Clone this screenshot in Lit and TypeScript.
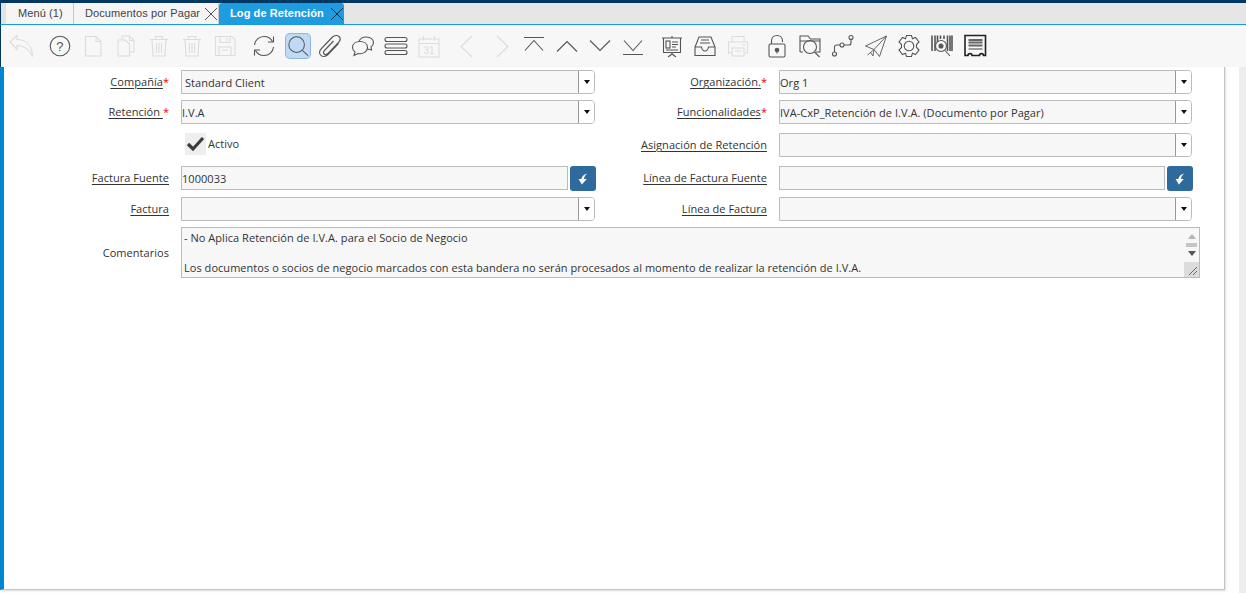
import { LitElement, html, css, svg } from 'lit';
import { customElement } from 'lit/decorators.js';

// toolbar icons, 24x24 box, stroke only unless a shape says otherwise
const ICONS: Record<string, unknown> = {
  undo: svg`<path d="M1 8 8 1.500V5.500C16 5.500 23 10 23.500 22.500 20 15 15 11.500 8 11.500V15.500Z"/>`,
  help: svg`<circle cx="12" cy="12" r="9.800"/><text class="ic-t" x="12" y="17" text-anchor="middle">?</text>`,
  doc: svg`<path d="M4.500 2.500H15L20 7.500V22H4.500Z"/><path d="M15 2.500V7.500H20"/>`,
  copy: svg`<path d="M8 5V2H15.500L20 6.500V18H16"/><path d="M15.500 2V6.500H20"/><path d="M4 6H11L15.500 10V22H4Z"/>`,
  trash: svg`<path d="M3 5.500H21M8.500 5.500V2.500H15.500V5.500M5 5.500 6 22H18L19 5.500M9.500 9V19M12 9V19M14.500 9V19"/>`,
  save: svg`<path d="M2.500 2.500H19L22 5.500V21.500H2.500Z"/><path d="M7 2.500V8.500H17V2.500M14 4V7M6 21.500V13H18V21.500M9 16H15"/>`,
  refresh: svg`<path d="M2.500 11C3 6 7 2.500 12 2.500 16 2.500 19 4.500 20.500 7.500M21.500 13C21 18 17 21.500 12 21.500 8 21.500 5 19.500 3.500 16.500"/><path d="M21.500 2.500V8H16M2.500 21.500V16H8"/>`,
  search: svg`<circle cx="10.500" cy="10.500" r="8.500"/><path d="M16.800 16.800 23 22.500"/>`,
  clip: svg`<path d="M20.500 9.500 10 20.500C7.500 23 4 23 2.500 21 1 19 1.500 16.500 3.500 14.500L14.500 3C16.500 1 19.500 1 21 2.500 22.500 4 22.500 6.500 20.500 8.500L10 19.500C8.800 20.800 7 20.800 6.200 20 5.200 19 5.500 17.500 6.500 16.500L15.500 7"/>`,
  chat: svg`<path d="M9 7.500C4.500 7.500 1.500 10 1.500 13.500 1.500 15.500 2.500 17 4 18L3 21.500 7 19.500C12 20.500 16.500 17.500 16.500 13.500 16.500 10 13.500 7.500 9 7.500Z"/><path d="M8 7.500C9 4.500 12 3 15.500 3 19.500 3 22.500 5.500 22.500 8.500 22.500 10.500 21.500 12 20 13L20.500 16 16.500 15"/>`,
  rows: svg`<rect x="1" y="3.500" width="22" height="4" rx="2"/><rect x="1" y="10" width="22" height="4" rx="2"/><rect x="1" y="16.500" width="22" height="4" rx="2"/>`,
  cal: svg`<path d="M2 5H22V23H2ZM2 9.500H22M6.500 2V6.500M17.500 2V6.500"/><text class="ic-n" x="12" y="20" text-anchor="middle">31</text>`,
  prev: svg`<path d="M16 2 5 12.500 16 23"/>`,
  next: svg`<path d="M8 2 19 12.500 8 23"/>`,
  first: svg`<path d="M2 3.500H22M3 16.500 12 6.500 21 16.500"/>`,
  up: svg`<path d="M2 17.500 12 7.500 22 17.500"/>`,
  down: svg`<path d="M2 6.500 12 16.500 22 6.500"/>`,
  last: svg`<path d="M2 20.500H22M3 6.500 12 16.500 21 6.500"/>`,
  report: svg`<path d="M2 4H22M3.500 4V18.500H20.500V4M12 2V4M12 18.500V20M8 23 12 20 16 23"/><rect x="6" y="7" width="4" height="7"/><path d="M12 8H18M12 10.500H18M12 13H16M6 16H18"/>`,
  inbox: svg`<path d="M6 3H18L22 13V21.500H2V13ZM2 13H8.500C9 16 10 17 12 17 14 17 15 16 15.500 13H22M8 6H16M7 9H17"/>`,
  print: svg`<path d="M6 8V2.500H18V8M6 19H2.500V8H21.500V19H18M6 14H18V22H6ZM9 17H15M16 11H19"/>`,
  lock: svg`<rect x="4" y="10" width="16" height="13" rx="1.500"/><path d="M6.500 10V7C6.500 3.500 9 1.500 12 1.500 15 1.500 17.500 3.500 17.500 7V8"/><circle cx="12" cy="16" r="1.800" class="ic-f"/><path d="M12 17V19.500"/>`,
  zoom: svg`<path d="M2 18V2H10L12.500 5H22V18H18M2 18H5M2 7H22"/><circle cx="12" cy="13" r="6.500"/><path d="M16.500 18 21.500 23"/>`,
  flow: svg`<circle cx="3.500" cy="20" r="2"/><circle cx="11" cy="11" r="2"/><circle cx="20" cy="3.500" r="2"/><path d="M3.500 18V13C3.500 11.500 4.500 11 6 11H9M13 11H18C19.500 11 20 10.500 20 9V5.500"/>`,
  send: svg`<path class="ic-thin" d="M1.500 12 22.500 2 15.500 22.500 10 15.500ZM22.500 2 10 15.500 9 22 6.500 18.500M3.500 21 9.500 16"/>`,
  gear: svg`<circle cx="12" cy="12" r="4.800"/><path d="M9.500 1.500H14.500L15.500 4.800 18.500 3.500 22 8 19.500 10.500V13.500L22 16 18.500 20.500 15.500 19.200 14.500 22.500H9.500L8.500 19.200 5.500 20.500 2 16 4.500 13.500V10.500L2 8 5.500 3.500 8.500 4.800Z"/>`,
  barcode: svg`<path class="ic-bar" d="M2 1.500V17M5 1.500V17M7.500 1.500V8M10.500 1.500V5M14 1.500V5M17.500 1.500V17M20 1.500V17M22 1.500V17"/><circle cx="11" cy="12" r="5.500"/><circle cx="11" cy="12" r="2" class="ic-f"/><path d="M15 16.500 20 22"/>`,
  receipt: svg`<path class="ic-b" d="M2 1.500H22.500V21.500H20.500C20.500 19 16.500 19 16.500 21.500H9C9 19 5 19 5 21.500H2Z"/><path class="ic-band" d="M5.500 6H19.500M5.500 8.500H19.500M5.500 11.500H19.500"/><path d="M5.500 15H19.500"/>`,
};

type Tool = { icon: string; off?: boolean; on?: boolean };

const GROUPS: Tool[][] = [
  [{ icon: 'undo', off: true }],
  [
    { icon: 'help' },
    { icon: 'doc', off: true },
    { icon: 'copy', off: true },
    { icon: 'trash', off: true },
    { icon: 'trash', off: true },
    { icon: 'save', off: true },
  ],
  [
    { icon: 'refresh' },
    { icon: 'search', on: true },
    { icon: 'clip' },
    { icon: 'chat' },
    { icon: 'rows' },
    { icon: 'cal', off: true },
  ],
  [
    { icon: 'prev', off: true },
    { icon: 'next', off: true },
    { icon: 'first' },
    { icon: 'up' },
    { icon: 'down' },
    { icon: 'last' },
  ],
  [{ icon: 'report' }, { icon: 'inbox' }, { icon: 'print', off: true }],
  [
    { icon: 'lock' },
    { icon: 'zoom' },
    { icon: 'flow' },
    { icon: 'send' },
    { icon: 'gear' },
    { icon: 'barcode' },
    { icon: 'receipt' },
  ],
];

@customElement('app-root')
export class AppRoot extends LitElement {
  static styles = css`
    :host {
      display: flex;
      flex-direction: column;
      width: 1246px;
      height: 593px;
      overflow: hidden;
      background: #fff;
      font: 11px/15px 'Open Sans', sans-serif;
      letter-spacing: 0.04px;
      color: #333;
    }
    .topline { height: 3px; background: #003863; flex: none; }

    .tabs {
      flex: none;
      display: flex;
      height: 21px;
      padding-left: 5px;
      background: #e2e2e2;
      border-left: 1px solid #003863;
      border-bottom: 1px solid #1a9de0;
      font: 11px/21px 'Liberation Sans', sans-serif;
      letter-spacing: 0.1px;
      white-space: nowrap;
    }
    .tabs .fill { flex: 1; background: #e6e6e6; }
    .tab {
      display: flex;
      box-sizing: border-box;
      background: #f5f5f5;
      border-right: 1px solid #c8c8c8;
      color: #444;
    }
    .tab.menu { width: 68px; padding-left: 12px; }
    .tab.docs { width: 145px; padding-left: 11px; gap: 4px; }
    .tab.active {
      width: 125px;
      padding-left: 11px;
      gap: 6px;
      background: #1f9ce0;
      border: 0;
      border-radius: 3px 3px 0 0;
      color: #fff;
      font-weight: bold;
    }
    .tab svg { width: 14px; height: 14px; margin-top: 4px; fill: none; stroke: #555; stroke-width: 1; flex: none; }
    .tab.active svg { stroke: #0b2c44; }

    .toolbar {
      flex: none;
      display: flex;
      gap: 6px;
      height: 42px;
      padding-left: 3px;
      background: #f7f7f7;
      border-left: 1px solid #003863;
      align-items: center;
    }
    .group { display: flex; }
    .tool {
      width: 33px;
      height: 24px;
      display: flex;
      align-items: center;
      justify-content: center;
    }
    .tool svg {
      width: 24px;
      height: 24px;
      fill: none;
      stroke: #555;
      stroke-width: 1.100;
    }
    .tool.off svg { stroke: #dcdcdc; }
    .tool.on svg {
      background: #bfd9f7;
      box-shadow: 0 0 0 1px #8fb5e0;
      border-radius: 4px;
      padding: 1px;
      margin-left: 2px;
      box-sizing: content-box;
      width: 22px;
      height: 22px;
    }
    .ic-t { font: 13px 'Liberation Sans', sans-serif; fill: #555; stroke: none; }
    .ic-n { font: 10px 'Liberation Sans', sans-serif; fill: #dcdcdc; stroke: none; }
    .ic-f { fill: #555; }
    .ic-b { stroke: #222; stroke-width: 1.600; }
    .ic-bar { stroke-width: 1.600; }
    .ic-band { stroke: #666; stroke-width: 2; }
    .ic-thin { stroke-width: 0.900; }

    .body { flex: 1; display: flex; min-height: 0; }
    .panel {
      width: 1225px;
      height: 523px;
      box-sizing: border-box;
      flex: none;
      border-left: 4px solid #0086d0;
      border-right: 1px solid #c4c4c4;
      border-bottom: 1px solid #c4c4c4;
      box-shadow: 1px 1px 2px #ddd;
      background: #fff;
    }
    .gutter { flex: 1; }
    .rail { width: 7px; background: #eee; flex: none; }

    form {
      display: grid;
      grid-template-columns: 177px 415px 183px 421px;
      grid-template-rows: 30px 33px 33px 31px 30px 51px;
      padding-top: 3px;
      align-items: start;
    }
    .lbl {
      height: 24px;
      line-height: 24px;
      padding-right: 12px;
      text-align: right;
      white-space: pre;
    }
    .lbl u { text-underline-offset: 2px; }
    .lbl b { color: #f00000; font-weight: normal; }
    .lbl.mid { height: 51px; line-height: 51px; }

    .field {
      box-sizing: border-box;
      height: 24px;
      border: 1px solid #bbb;
      background: #f7f7f7;
      line-height: 24px;
      white-space: nowrap;
      overflow: hidden;
    }
    .sel { display: flex; width: 414px; border-radius: 0 4px 4px 0; }
    .right .sel { width: 413px; }
    .sel span { flex: 1; padding-left: 3px; line-height: 24px; }
    .sel .pad { padding-left: 0; }
    .sel i {
      flex: none;
      width: 15px;
      background: #fff;
      border-left: 1px solid #999;
      display: flex;
      align-items: center;
      justify-content: center;
    }
    .sel i::after {
      content: '';
      border: 3.500px solid transparent;
      border-top: 4px solid #111;
      border-bottom: 0;
    }

    .lookup { display: flex; gap: 2px; }
    .lookup .field { width: 387px; padding-left: 0; }
    .right.lookup .field { width: 386px; }
    .btn {
      width: 26px;
      height: 25px;
      background: #2f6a9d;
      border-radius: 3px;
      display: flex;
      align-items: center;
      justify-content: center;
    }
    .btn svg { width: 11px; height: 12px; fill: #fff; }

    .check { display: flex; align-items: center; gap: 2px; padding-left: 4px; height: 22px; }
    .check span { margin-top: -2px; }
    .box {
      width: 21px;
      height: 22px;
      background: #eee;
      display: flex;
      align-items: center;
      justify-content: center;
    }
    .box svg { width: 19px; height: 16px; fill: none; stroke: #3c3c3c; stroke-width: 3.200; }

    .notes {
      grid-column: 2 / 5;
      box-sizing: border-box;
      height: 51px;
      border: 1px solid #bbb;
      background: #f7f7f7;
      display: flex;
    }
    .notes p { flex: 1; margin: 0; padding: 2px; white-space: pre; }
    .sbar {
      flex: none;
      width: 15px;
      background: #f7f7f7;
      display: flex;
      flex-direction: column;
      align-items: center;
    }
    .up { margin-top: 6px; border: 4px solid transparent; border-bottom: 5px solid #b4b4b4; border-top: 0; }
    .thumb { width: 11px; height: 4px; background: #c4c4c4; margin-top: 4px; }
    .dn { margin-top: 4px; border: 4px solid transparent; border-top: 5px solid #555; border-bottom: 0; }
    .grip { margin-top: auto; width: 15px; height: 15px; background: #dcdcdc; }
    .grip svg { display: block; width: 15px; height: 15px; stroke: #666; fill: none; }
  `;

  private close() {
    return html`<svg viewBox="0 0 14 14"><path d="M1 1 13 13M13 1 1 13" /></svg>`;
  }

  private label(text: string, star = '') {
    return html`<div class="lbl"><u>${text}</u>${star ? html`<b>${star}</b>` : ''}</div>`;
  }

  private select(value = '', side = '', pad = false) {
    return html`<div class=${side}>
      <div class="field sel"><span class=${pad ? 'pad' : ''}>${value}</span><i></i></div>
    </div>`;
  }

  private lookup(value = '', side = '') {
    return html`<div class="lookup ${side}">
      <div class="field">${value}</div>
      <div class="btn">
        <svg viewBox="0 0 10 11"><path d="M8.500 .5C5.500 1 3.500 3 3 5.500H.5L3.500 10.500 8 5.500H5.500C5.500 3.500 7 1.500 8.500 .5Z" /></svg>
      </div>
    </div>`;
  }

  render() {
    return html`
      <div class="topline"></div>
      <div class="tabs">
        <div class="tab menu">Menú (1)</div>
        <div class="tab docs">Documentos por Pagar${this.close()}</div>
        <div class="tab active">Log de Retención${this.close()}</div>
        <div class="fill"></div>
      </div>
      <div class="toolbar">
        ${GROUPS.map(
          (g) => html`<div class="group">
            ${g.map(
              (t) => html`<div class="tool ${t.off ? 'off' : ''} ${t.on ? 'on' : ''}">
                <svg viewBox="0 0 24 24">${ICONS[t.icon]}</svg>
              </div>`,
            )}
          </div>`,
        )}
      </div>
      <div class="body">
        <div class="panel">
          <form>
            ${this.label('Compañía', '*')} ${this.select('Standard Client')}
            ${this.label('Organización.', '*')} ${this.select('Org 1', 'right', true)}

            ${this.label('Retención ', '*')} ${this.select('I.V.A', '', true)}
            ${this.label('Funcionalidades', '*')}
            ${this.select('IVA-CxP_Retención de I.V.A. (Documento por Pagar)', 'right', true)}

            <div></div>
            <div class="check">
              <div class="box"><svg viewBox="0 0 19 16"><path d="M2 8 7 13 17 2" /></svg></div>
              <span>Activo</span>
            </div>
            ${this.label('Asignación de Retención')} ${this.select('', 'right')}

            ${this.label('Factura Fuente')} ${this.lookup('1000033')}
            ${this.label('Línea de Factura Fuente')} ${this.lookup('', 'right')}

            ${this.label('Factura')} ${this.select()}
            ${this.label('Línea de Factura')} ${this.select('', 'right')}

            <div class="lbl mid">Comentarios</div>
            <div class="notes">
              <p>- No Aplica Retención de I.V.A. para el Socio de Negocio

Los documentos o socios de negocio marcados con esta bandera no serán procesados al momento de realizar la retención de I.V.A.</p>
              <div class="sbar">
                <div class="up"></div>
                <div class="thumb"></div>
                <div class="dn"></div>
                <div class="grip"><svg viewBox="0 0 15 15"><path d="M5 13 13 5M9 13 13 9" /></svg></div>
              </div>
            </div>
          </form>
        </div>
        <div class="gutter"></div>
        <div class="rail"></div>
      </div>
    `;
  }
}
